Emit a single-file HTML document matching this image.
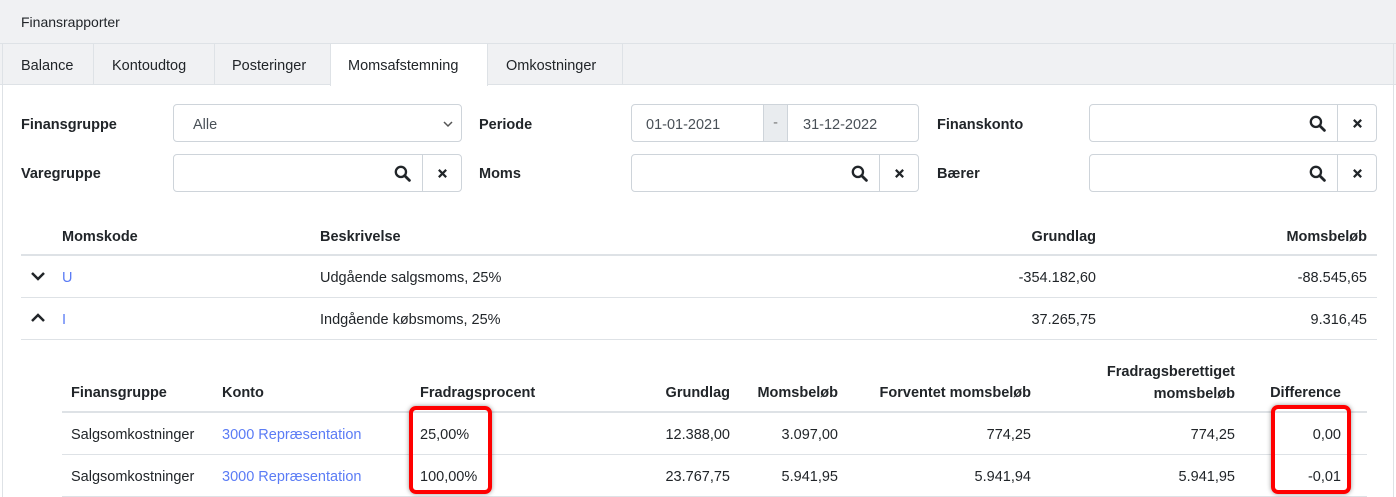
<!DOCTYPE html>
<html><head><meta charset="utf-8"><style>
*{box-sizing:border-box;margin:0;padding:0}
body{width:1396px;height:497px;overflow:hidden;background:#fff;font-family:"Liberation Sans",sans-serif;font-size:14.5px;color:#212529;position:relative}
.a{position:absolute;white-space:nowrap;line-height:18px;margin-top:1px}
.r{text-align:right}
.b{font-weight:bold}
.l{color:#5b7cf5}
.hl{position:absolute;height:1px;background:#dee2e6}
.box{position:absolute;border:1px solid #ced4da;border-radius:4px;background:#fff}
.btn{position:absolute;top:0;bottom:0;width:39px;border-left:1px solid #ced4da;display:flex;align-items:center;justify-content:center}
.red{position:absolute;border:4px solid #f00;border-radius:7px;box-shadow:0 0 5px rgba(0,0,0,.4)}
</style></head><body>
<svg width="0" height="0" style="position:absolute"><defs>
<symbol id="q" viewBox="0 0 16 16"><circle cx="6.5" cy="6.5" r="4.8" fill="none" stroke="#212529" stroke-width="2.2"/><path d="M10 10l4.5 4.5" stroke="#212529" stroke-width="2.6" stroke-linecap="round"/></symbol>
<symbol id="x" viewBox="0 0 12 12"><path d="M2 2l8 8M10 2l-8 8" stroke="#212529" stroke-width="2.4"/></symbol>
</defs></svg>
<div style="position:absolute;left:0;top:0;width:1396px;height:85px;background:#f0f1f3;border-bottom:1px solid #dee2e6"></div>
<div style="position:absolute;left:0;top:43px;width:1396px;height:1px;background:#dee2e6"></div>
<div style="position:absolute;left:2px;top:43px;width:1px;height:454px;background:#dee2e6"></div>
<div style="position:absolute;left:1393px;top:43px;width:1px;height:454px;background:#dee2e6"></div>
<div class="a" style="left:21px;top:12px;font-size:14px">Finansrapporter</div>
<div style="position:absolute;left:93px;top:44px;width:1px;height:41px;background:#dee2e6"></div>
<div style="position:absolute;left:214px;top:44px;width:1px;height:41px;background:#dee2e6"></div>
<div style="position:absolute;left:330px;top:44px;width:158px;height:42px;background:#fff;border-left:1px solid #dee2e6;border-right:1px solid #dee2e6"></div>
<div style="position:absolute;left:622px;top:44px;width:1px;height:41px;background:#dee2e6"></div>
<div class="a" style="left:21px;top:56px">Balance</div>
<div class="a" style="left:112px;top:56px">Kontoudtog</div>
<div class="a" style="left:232px;top:56px">Posteringer</div>
<div class="a" style="left:348px;top:56px">Momsafstemning</div>
<div class="a" style="left:506px;top:56px">Omkostninger</div>

<div class="a b" style="left:21px;top:115px">Finansgruppe</div>
<div class="a b" style="left:21px;top:164px">Varegruppe</div>
<div class="a b" style="left:479px;top:115px">Periode</div>
<div class="a b" style="left:479px;top:164px">Moms</div>
<div class="a b" style="left:937px;top:115px">Finanskonto</div>
<div class="a b" style="left:937px;top:164px">Bærer</div>

<div class="box" style="left:173px;top:104px;width:289px;height:38px"><div class="a" style="left:19px;top:10px;color:#495057">Alle</div>
<svg style="position:absolute;right:8px;top:16px" width="10" height="7" viewBox="0 0 10 7"><path d="M1 1l4 4 4-4" fill="none" stroke="#555" stroke-width="1.5"/></svg></div>
<div class="box" style="left:631px;top:104px;width:288px;height:38px"><div class="a" style="left:14px;top:10px;color:#495057">01-01-2021</div>
<div style="position:absolute;left:131px;top:0;bottom:0;width:25px;background:#e9ecef;border-left:1px solid #ced4da;border-right:1px solid #ced4da;text-align:center;line-height:36px;color:#777">-</div>
<div class="a" style="left:171px;top:10px;color:#495057">31-12-2022</div></div>

<div class="box" style="left:1089px;top:104px;width:288px;height:38px"><div class="btn" style="right:39px;border:none"><svg width="17" height="17"><use href="#q"/></svg></div><div class="btn" style="right:0"><svg width="11" height="11"><use href="#x"/></svg></div></div>
<div class="box" style="left:173px;top:154px;width:289px;height:38px"><div class="btn" style="right:39px;border:none"><svg width="17" height="17"><use href="#q"/></svg></div><div class="btn" style="right:0"><svg width="11" height="11"><use href="#x"/></svg></div></div>
<div class="box" style="left:631px;top:154px;width:288px;height:38px"><div class="btn" style="right:39px;border:none"><svg width="17" height="17"><use href="#q"/></svg></div><div class="btn" style="right:0"><svg width="11" height="11"><use href="#x"/></svg></div></div>
<div class="box" style="left:1089px;top:154px;width:288px;height:38px"><div class="btn" style="right:39px;border:none"><svg width="17" height="17"><use href="#q"/></svg></div><div class="btn" style="right:0"><svg width="11" height="11"><use href="#x"/></svg></div></div>

<div class="a b" style="left:62px;top:227px">Momskode</div>
<div class="a b" style="left:320px;top:227px">Beskrivelse</div>
<div class="a b r" style="right:300px;top:227px">Grundlag</div>
<div class="a b r" style="right:29px;top:227px">Momsbeløb</div>
<div class="hl" style="left:21px;top:254px;width:1356px;height:2px"></div>
<svg style="position:absolute;left:30px;top:271px" width="16" height="10" viewBox="0 0 16 10"><path d="M2 2l6 6 6-6" fill="none" stroke="#212529" stroke-width="2.5"/></svg>
<div class="a l" style="left:62px;top:268px">U</div>
<div class="a" style="left:320px;top:268px">Udgående salgsmoms, 25%</div>
<div class="a r" style="right:300px;top:268px">-354.182,60</div>
<div class="a r" style="right:29px;top:268px">-88.545,65</div>
<div class="hl" style="left:21px;top:297px;width:1356px"></div>
<svg style="position:absolute;left:30px;top:313px" width="16" height="10" viewBox="0 0 16 10"><path d="M2 8l6-6 6 6" fill="none" stroke="#212529" stroke-width="2.5"/></svg>
<div class="a l" style="left:62px;top:310px">I</div>
<div class="a" style="left:320px;top:310px">Indgående købsmoms, 25%</div>
<div class="a r" style="right:300px;top:310px">37.265,75</div>
<div class="a r" style="right:29px;top:310px">9.316,45</div>
<div class="hl" style="left:21px;top:339px;width:1356px"></div>

<div class="a b" style="left:71px;top:383px">Finansgruppe</div>
<div class="a b" style="left:222px;top:383px">Konto</div>
<div class="a b" style="left:420px;top:383px">Fradragsprocent</div>
<div class="a b r" style="right:666px;top:383px">Grundlag</div>
<div class="a b r" style="right:558px;top:383px">Momsbeløb</div>
<div class="a b r" style="right:365px;top:383px">Forventet momsbeløb</div>
<div class="a b r" style="right:161px;top:360px;line-height:22px">Fradragsberettiget<br>momsbeløb</div>
<div class="a b r" style="right:55px;top:383px">Difference</div>
<div class="hl" style="left:62px;top:411px;width:1305px;height:2px"></div>
<div class="a" style="left:71px;top:425px">Salgsomkostninger</div>
<div class="a l" style="left:222px;top:425px">3000 Repræsentation</div>
<div class="a" style="left:420px;top:425px">25,00%</div>
<div class="a r" style="right:666px;top:425px">12.388,00</div>
<div class="a r" style="right:558px;top:425px">3.097,00</div>
<div class="a r" style="right:365px;top:425px">774,25</div>
<div class="a r" style="right:161px;top:425px">774,25</div>
<div class="a r" style="right:55px;top:425px">0,00</div>
<div class="hl" style="left:62px;top:454px;width:1305px"></div>
<div class="a" style="left:71px;top:467px">Salgsomkostninger</div>
<div class="a l" style="left:222px;top:467px">3000 Repræsentation</div>
<div class="a" style="left:420px;top:467px">100,00%</div>
<div class="a r" style="right:666px;top:467px">23.767,75</div>
<div class="a r" style="right:558px;top:467px">5.941,95</div>
<div class="a r" style="right:365px;top:467px">5.941,94</div>
<div class="a r" style="right:161px;top:467px">5.941,95</div>
<div class="a r" style="right:55px;top:467px">-0,01</div>
<div class="hl" style="left:62px;top:496px;width:1305px"></div>

<div class="red" style="left:409px;top:406px;width:83px;height:88px"></div>
<div class="red" style="left:1271px;top:405px;width:80px;height:89px"></div>
</body></html>
